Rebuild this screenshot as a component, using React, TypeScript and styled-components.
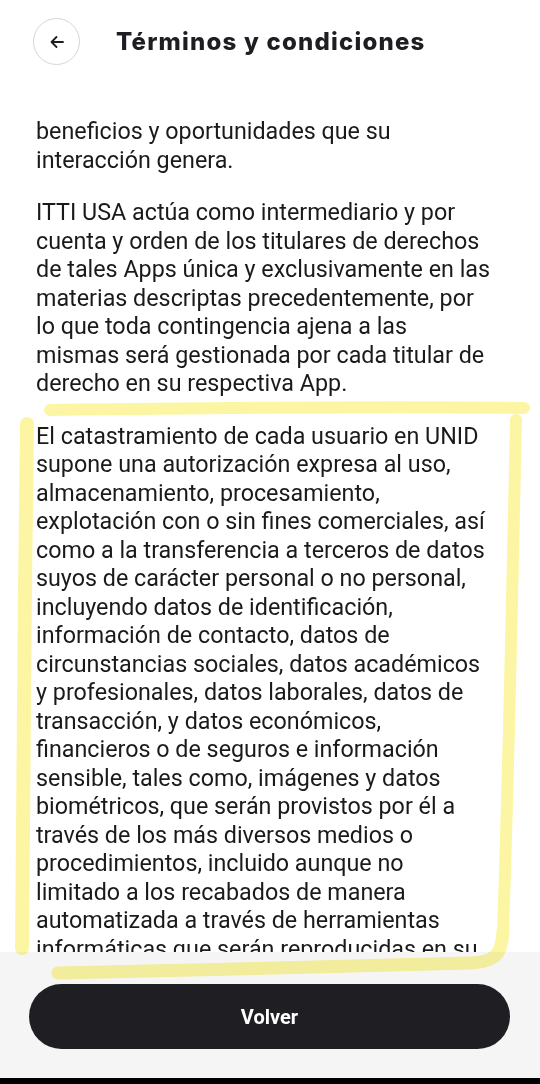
import React from 'react';
import styled, { createGlobalStyle } from 'styled-components';

const GlobalStyle = createGlobalStyle`
  html, body {
    margin: 0;
    padding: 0;
    background: #ffffff;
  }
  * {
    box-sizing: border-box;
  }
`;

const Screen = styled.div`
  position: relative;
  width: 540px;
  height: 1084px;
  display: flex;
  flex-direction: column;
  overflow: hidden;
  background: #ffffff;
`;

const Header = styled.header`
  height: 85px;
  flex: none;
  display: flex;
  align-items: center;
  gap: 36px;
  padding: 0 0 0 33px;
`;

const BackButton = styled.button`
  width: 47px;
  height: 47px;
  border-radius: 50%;
  border: 1.5px solid #d6d6d6;
  background: #ffffff;
  display: flex;
  align-items: center;
  justify-content: center;
  padding: 0;
  margin-bottom: 2px;
`;

const Title = styled.h1`
  margin: 0 0 2px 0;
  font-family: Inter, 'Noto Sans', sans-serif;
  font-weight: 800;
  font-size: 24px;
  letter-spacing: 1.2px;
  color: #1e1e22;
`;

const Body = styled.main`
  flex: 1;
  overflow: hidden;
  padding: 32px 20px 0 36px;
`;

const Paragraph = styled.p`
  margin: 0 0 24px 0;
  font-family: Roboto, 'Liberation Sans', sans-serif;
  font-size: 23.3px;
  line-height: 28.5px;
  color: #1a1a1a;
`;

const Line = styled.span`
  display: block;
  white-space: nowrap;
`;

const Footer = styled.footer`
  flex: none;
  height: 126px;
  background: #f5f5f5;
  padding: 32px 30px 0 29px;
`;

const PrimaryButton = styled.button`
  width: 100%;
  height: 65px;
  border: none;
  border-radius: 33px;
  background: #1f1f23;
  color: #ffffff;
  font-family: Roboto, 'Liberation Sans', sans-serif;
  font-weight: 700;
  font-size: 20px;
`;

const NavBar = styled.div`
  flex: none;
  height: 6px;
  background: #000000;
`;

const Highlight = styled.svg`
  position: absolute;
  left: 0;
  top: 0;
  pointer-events: none;
  mix-blend-mode: multiply;
`;

// líneas tal como las corta la pantalla original
const paragraphs: string[][] = [
  ['beneficios y oportunidades que su', 'interacción genera.'],
  [
    'ITTI USA actúa como intermediario y por',
    'cuenta y orden de los titulares de derechos',
    'de tales Apps única y exclusivamente en las',
    'materias descriptas precedentemente, por',
    'lo que toda contingencia ajena a las',
    'mismas será gestionada por cada titular de',
    'derecho en su respectiva App.',
  ],
  [
    'El catastramiento de cada usuario en UNID',
    'supone una autorización expresa al uso,',
    'almacenamiento, procesamiento,',
    'explotación con o sin fines comerciales, así',
    'como a la transferencia a terceros de datos',
    'suyos de carácter personal o no personal,',
    'incluyendo datos de identificación,',
    'información de contacto, datos de',
    'circunstancias sociales, datos académicos',
    'y profesionales, datos laborales, datos de',
    'transacción, y datos económicos,',
    'financieros o de seguros e información',
    'sensible, tales como, imágenes y datos',
    'biométricos, que serán provistos por él a',
    'través de los más diversos medios o',
    'procedimientos, incluido aunque no',
    'limitado a los recabados de manera',
    'automatizada a través de herramientas',
    'informáticas que serán reproducidas en su',
    'plataforma.',
  ],
];

export default function App() {
  return (
    <>
      <GlobalStyle />
      <Screen>
        <Header>
          <BackButton aria-label="Volver">
            <svg width="16" height="16" viewBox="0 0 16 16" fill="none">
              <path
                d="M14 8H2.5M7.5 3L2.5 8L7.5 13"
                stroke="#1e1e22"
                strokeWidth="1.8"
                strokeLinecap="round"
                strokeLinejoin="round"
              />
            </svg>
          </BackButton>
          <Title>Términos y condiciones</Title>
        </Header>
        <Body>
          {paragraphs.map((lines, i) => (
            <Paragraph key={i}>
              {lines.map((line, j) => (
                <Line key={j}>{line}</Line>
              ))}
            </Paragraph>
          ))}
        </Body>
        <Footer>
          <PrimaryButton>Volver</PrimaryButton>
        </Footer>
        <NavBar />
        <Highlight width="540" height="1084" viewBox="0 0 540 1084">
          <g stroke="#fcf6a4" strokeLinecap="round" fill="none">
            <path d="M50 410 C 200 408, 400 406, 524 408" strokeWidth="12" />
            <path d="M27 424 C 25 600, 22 800, 22 948" strokeWidth="14" />
            <path d="M516 420 C 512 600, 508 800, 503 930" strokeWidth="12" />
            <path d="M58 973 C 200 970, 380 966, 470 963 C 495 962, 502 955, 503 930" strokeWidth="13" />
          </g>
        </Highlight>
      </Screen>
    </>
  );
}
